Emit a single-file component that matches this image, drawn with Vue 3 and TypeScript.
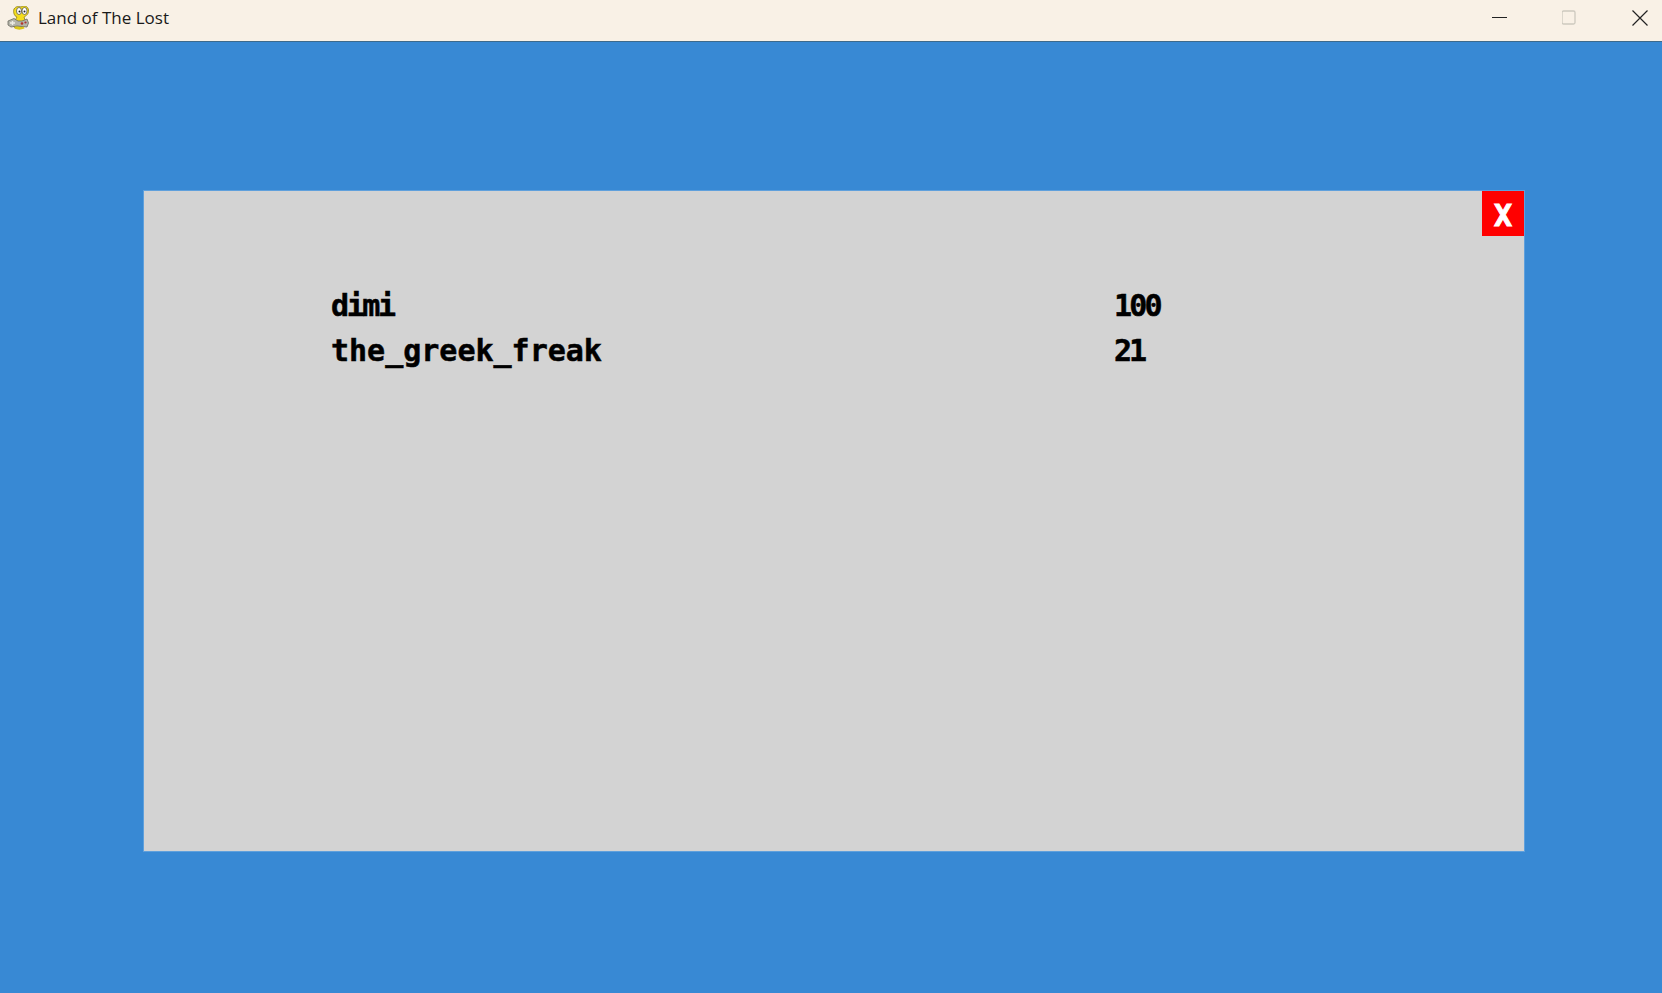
<script setup lang="ts">
// tracking stands in for the game's pixel font, which has narrow i, m and 1
const scores = [
  { name: 'dimi', nameTracking: -2.4, score: 100, scoreTracking: -2.8 },
  { name: 'the_greek_freak', nameTracking: 0, score: 21, scoreTracking: -3 },
];
</script>

<template>
  <div class="window">
    <header class="titlebar">
      <svg class="app-icon" width="22" height="24" viewBox="0 0 22 24">
        <path d="M6 20 C4 17 8 15 10 11 C7 10 6 6 7 3 C9 0 12 0 14 1 C17 -1 21 0 21.500 4 C22 8 19 10 17 11 C18 14 19 16 18 19 C17 23 9 24 6 20z" fill="#f4dc1e" stroke="#8d7d10" stroke-width=".8" />
        <path d="M1 15 L7 12.500 L11 15 L15 15 L20 13 L21.500 17 L20 21 L15 20.500 L10 20 L4 21 L1 19z" fill="#b4b4aa" stroke="#6a6a60" stroke-width=".8" />
        <ellipse cx="12" cy="5" rx="2.500" ry="3.500" fill="#fff" stroke="#444" stroke-width=".7" />
        <ellipse cx="17.500" cy="5" rx="2.500" ry="3.500" fill="#fff" stroke="#444" stroke-width=".7" />
        <circle cx="12.500" cy="5.500" r="1" fill="#222" />
        <circle cx="17.500" cy="5.500" r="1" fill="#222" />
        <path d="M3 17 h5 M5.500 15 v4" stroke="#eeeee6" stroke-width="1.400" />
        <circle cx="15" cy="17.500" r="1.300" fill="#b5342a" />
        <circle cx="18.500" cy="16.500" r="1.100" fill="#a33" />
        <path d="M8 21.500 q4 2 9 0" stroke="#d9c518" stroke-width="2.400" fill="none" />
      </svg>
      <span class="title">Land of The Lost</span>
      <div class="controls">
        <svg width="16" height="16" viewBox="0 0 16 16"><path d="M0 7.500h15" stroke="#222" stroke-width="1" /></svg>
        <svg width="16" height="16" viewBox="0 0 16 16"><rect x="0" y="1" width="13" height="13" rx="1.500" fill="none" stroke="#cdc9bf" stroke-width="1.300" /></svg>
        <svg width="16" height="16" viewBox="0 0 16 16"><path d="M.5 .5l15 15M15.500 .5l-15 15" stroke="#222" stroke-width="1.200" /></svg>
      </div>
    </header>

    <main class="stage">
      <section class="panel">
        <button class="close">X</button>
        <div v-for="row in scores" :key="row.name" class="row">
          <span :style="{ letterSpacing: row.nameTracking + 'px' }">{{ row.name }}</span>
          <span :style="{ letterSpacing: row.scoreTracking + 'px' }">{{ row.score }}</span>
        </div>
      </section>
    </main>
  </div>
</template>

<style>
html, body {
  margin: 0;
  height: 100%;
  overflow: hidden;
}
</style>

<style scoped>
.window {
  width: 1662px;
  height: 993px;
  display: flex;
  flex-direction: column;
  background: #3889d4;
}
.titlebar {
  height: 42px;
  box-sizing: border-box;
  flex-shrink: 0;
  display: flex;
  align-items: center;
  background: #f9f1e6;
  border-bottom: 1px solid #3d6a8c;
  padding: 0 0 6px 7px;
  font-family: "Open Sans", "Noto Sans", sans-serif;
  font-size: 17px;
  color: #1a1a1a;
}
.app-icon {
  margin-right: 9px;
}
.controls {
  margin-left: auto;
  display: flex;
  gap: 54px;
  padding-right: 14px;
}
.stage {
  flex: 1;
  padding: 149px 0 0 144px;
}
.panel {
  position: relative;
  width: 1380px;
  height: 660px;
  box-sizing: border-box;
  background: #d3d3d3;
  padding: 92px 0 0 187px;
  box-shadow: 0 0 0 1px rgba(255, 255, 255, 0.2);
}
.row {
  display: grid;
  grid-template-columns: 783px 1fr;
  height: 45px;
  align-items: center;
  font-family: "DejaVu Sans Mono", monospace;
  font-weight: 700;
  font-size: 30px;
  color: #000;
  -webkit-text-stroke: 0.5px #000;
}
.close {
  position: absolute;
  top: 0;
  right: 0;
  width: 42px;
  height: 45px;
  padding: 3px 0 0;
  border: 0;
  background: #ff0000;
  color: #fff;
  font-family: "DejaVu Sans Mono", monospace;
  font-weight: 700;
  font-size: 30px;
  -webkit-text-stroke: 1px #fff;
}
</style>
